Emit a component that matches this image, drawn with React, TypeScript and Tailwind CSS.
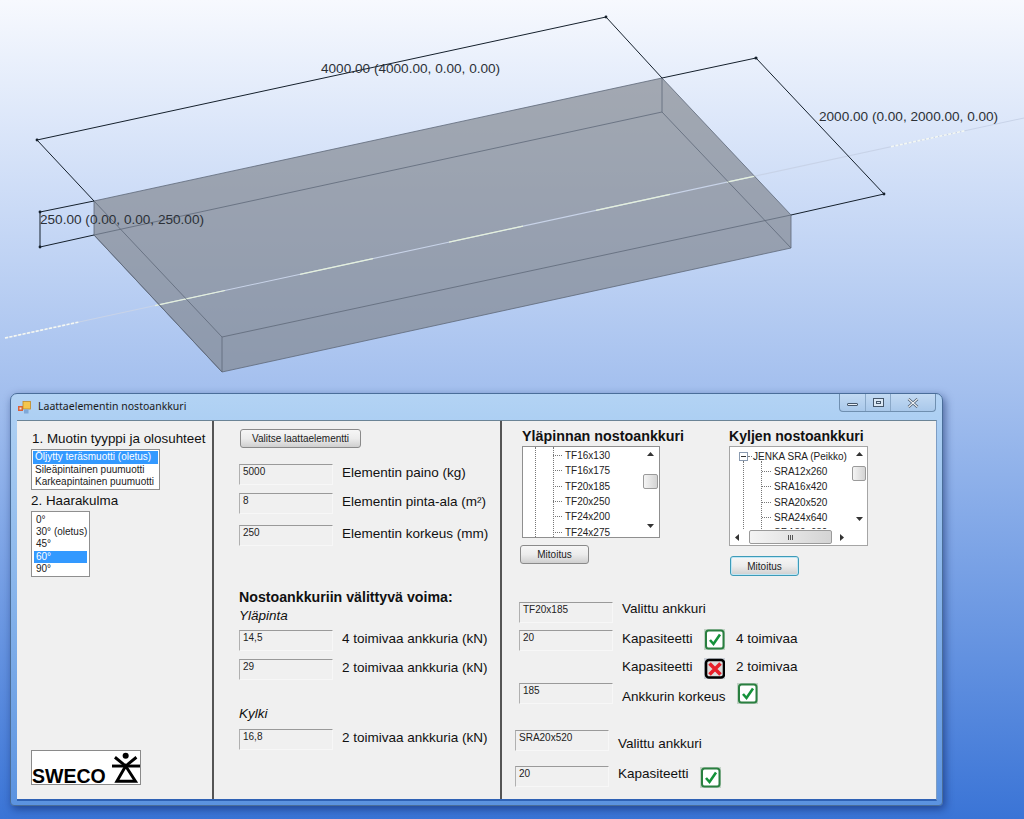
const sans = { fontFamily: '"Liberation Sans", Arial, sans-serif' };

const lineY = (x: number) => 338 - 0.2159 * (x - 5);

const brightDashes = [
  [155, 225],
  [300, 373],
  [449, 523],
  [596, 670],
  [727, 755],
];
const dottedDashes = [
  [5, 79],
  [891, 965],
];

function SlabView() {
  return (
    <svg className="block" width="1024" height="393" viewBox="0 0 1024 393">
      <polygon points="94,201 662,78 791,215 791,248 222,372 94,235" fill="#7f848c" fillOpacity="0.66" />
      <line x1="5" y1={lineY(5)} x2="1024" y2={lineY(1024)} stroke="#c8d3e8" strokeWidth="1.1" />
      {brightDashes.map(([a, b]) => (
        <line key={a} x1={a} y1={lineY(a)} x2={b} y2={lineY(b)} stroke="#e4f0dc" strokeWidth="1.2" />
      ))}
      {dottedDashes.map(([a, b]) => (
        <line key={a} x1={a} y1={lineY(a)} x2={b} y2={lineY(b)} stroke="#f4f8f4" strokeWidth="1.6" strokeDasharray="3 1.5" />
      ))}
      <g stroke="#5e6878" strokeWidth="0.8" fill="none">
        <polyline points="94,201 662,78 791,215 791,248 222,372 94,235 94,201" />
        <line x1="94" y1="235" x2="662" y2="112" />
        <line x1="662" y1="78" x2="662" y2="112" />
        <line x1="662" y1="112" x2="791" y2="248" />
        <line x1="94" y1="201" x2="222" y2="337" />
        <line x1="222" y1="337" x2="791" y2="215" />
        <line x1="222" y1="337" x2="222" y2="372" />
        <line x1="94" y1="235" x2="222" y2="372" />
      </g>
      <g stroke="#15202c" strokeWidth="1" fill="none">
        <polyline points="94,201 37,140 606,17 662,78 756,58 884,194 791,215" />
        <polyline points="94,201 40,212 40,247 94,235" />
      </g>
      <g fill="#15202c">
        <circle cx="37" cy="140" r="1.4" />
        <circle cx="606" cy="17" r="1.4" />
        <circle cx="756" cy="58" r="1.6" />
        <circle cx="884" cy="194" r="1.4" />
        <circle cx="40" cy="212" r="1.4" />
        <circle cx="40" cy="247" r="1.4" />
      </g>
      <g fill="#2c3138" fontSize="13.6" style={sans}>
        <text x="321" y="73">4000.00 (4000.00, 0.00, 0.00)</text>
        <text x="819" y="121">2000.00 (0.00, 2000.00, 0.00)</text>
        <text x="40" y="224">250.00 (0.00, 0.00, 250.00)</text>
      </g>
    </svg>
  );
}

function AppIcon() {
  return (
    <svg width="13" height="13" viewBox="0 0 13 13">
      <rect x="0" y="5" width="5" height="5" fill="#d9603a" />
      <rect x="1.5" y="6.5" width="2" height="2" fill="#fbe6c8" />
      <rect x="5" y="0.5" width="7.5" height="7.5" fill="#f4c64e" stroke="#c08a26" strokeWidth="0.8" />
      <rect x="6" y="8.5" width="4.5" height="4" fill="#7fa8d8" />
    </svg>
  );
}

function Field({ value }: { value: string }) {
  return (
    <div className="h-[21px] w-[94px] shrink-0 border border-t-[#9a9a9a] border-l-[#b0b0b0] border-r-[#f7f7f7] border-b-[#f7f7f7] bg-[#f0f0f0] pl-[3px] text-[10px] leading-[14px] text-[#222]">
      {value}
    </div>
  );
}

function Label({ children, className = '' }: { children: React.ReactNode; className?: string }) {
  return <div className={`text-[13.5px] leading-4 whitespace-nowrap text-[#111] ${className}`}>{children}</div>;
}

function Button({ children, focused, className }: { children: React.ReactNode; focused?: boolean; className: string }) {
  return (
    <div
      className={`flex items-center justify-center rounded-[3px] border bg-gradient-to-b from-[#f6f6f6] via-[#ececec] to-[#cfcfcf] text-[10px] text-[#222] ${
        focused ? 'border-[#3d9bb8] shadow-[inset_0_0_0_1px_#bfe6f5]' : 'border-[#8a8a8a]'
      } ${className}`}
    >
      {children}
    </div>
  );
}

function Check({ className = '' }: { className?: string }) {
  return (
    <svg className={`shrink-0 ${className}`} width="21" height="21" viewBox="0 0 21 21">
      <rect x="0" y="0" width="21" height="21" fill="#c3d2c6" />
      <rect x="2" y="1.5" width="17.5" height="18" rx="2.5" fill="#fff" stroke="#2a7f40" strokeWidth="2" />
      <path d="M6 11 L9.5 15 L16 5.5" fill="none" stroke="#14923a" strokeWidth="2.6" />
    </svg>
  );
}

function Cross() {
  return (
    <svg className="shrink-0" width="21" height="21" viewBox="0 0 21 21">
      <rect x="0" y="0" width="21" height="21" fill="#c9ced6" />
      <rect x="2" y="2" width="18" height="17.5" rx="3" fill="#ddd" stroke="#000" strokeWidth="2.6" />
      <path d="M5.5 5.5 L16.5 16.5 M16.5 5.5 L5.5 16.5" fill="none" stroke="#e8202a" strokeWidth="3.6" />
    </svg>
  );
}

function Arrow({ dir, className = '' }: { dir: 'up' | 'down' | 'left' | 'right'; className?: string }) {
  const pts = { up: '0,4 3.5,0 7,4', down: '0,0 3.5,4 7,0', left: '4,0 0,3.5 4,7', right: '0,0 4,3.5 0,7' }[dir];
  return (
    <svg className={`block shrink-0 ${className}`} width="7" height="7" viewBox="0 0 7 7">
      <polygon points={pts} fill="#333" />
    </svg>
  );
}

function Thumb({ className, children }: { className: string; children?: React.ReactNode }) {
  return (
    <div className={`shrink-0 rounded-[2px] border border-[#9a9a9a] bg-gradient-to-r from-[#f4f4f4] to-[#d4d4d4] ${className}`}>
      {children}
    </div>
  );
}

function TreeRow({ text, guides }: { text: string; guides: string }) {
  return (
    <div className={`flex h-[15.3px] items-center ${guides}`}>
      <span className="h-0 w-[9px] border-t border-dotted border-[#777]" />
      <span className="ml-[3px] text-[10px] text-[#222]">{text}</span>
    </div>
  );
}

function Guide({ className }: { className: string }) {
  return <div className={`absolute bottom-0 border-l border-dotted border-[#777] ${className}`} />;
}

const topAnchors = ['TF16x130', 'TF16x175', 'TF20x185', 'TF20x250', 'TF24x200', 'TF24x275'];
const sideAnchors = ['SRA12x260', 'SRA16x420', 'SRA20x520', 'SRA24x640', 'SRA30x680'];

function TopTree() {
  return (
    <div className="flex h-[92px] w-[138px] border border-[#8f8f8f] bg-white">
      <div className="relative flex-1 overflow-hidden pt-[1px]">
        <Guide className="top-0 left-[12px]" />
        <Guide className="top-0 left-[30px]" />
        {topAnchors.map((a) => (
          <TreeRow key={a} text={a} guides="pl-[30px]" />
        ))}
      </div>
      <div className="flex w-[17px] flex-col items-center pt-[5px]">
        <Arrow dir="up" />
        <Thumb className="mt-[15px] h-[15px] w-[15px]" />
        <Arrow dir="down" className="mt-[35px]" />
      </div>
    </div>
  );
}

function SideTree() {
  return (
    <div className="flex h-[100px] w-[139px] flex-col border border-[#a5a5a5] bg-white">
      <div className="flex min-h-0 flex-1">
        <div className="relative flex-1 overflow-hidden pt-[1px]">
          <Guide className="top-[14px] left-[13px]" />
          <Guide className="top-[14px] left-[31px]" />
          <div className="flex h-[16px] items-center pl-[9px]">
            <span className="flex h-[9px] w-[9px] items-center justify-center border border-[#8a9ab0] bg-white">
              <span className="h-0 w-[5px] border-t border-[#333]" />
            </span>
            <span className="h-0 w-[4px] border-t border-dotted border-[#777]" />
            <span className="ml-[1px] whitespace-nowrap text-[10px] text-[#222]">JENKA SRA (Peikko)</span>
          </div>
          {sideAnchors.map((a) => (
            <TreeRow key={a} text={a} guides="pl-[32px]" />
          ))}
        </div>
        <div className="flex w-[16px] flex-col items-center pt-[5px]">
          <Arrow dir="up" />
          <Thumb className="mt-[7px] h-[15px] w-[14px]" />
          <Arrow dir="down" className="mt-[36px]" />
        </div>
      </div>
      <div className="flex h-[16px] items-center pl-[5px]">
        <Arrow dir="left" />
        <Thumb className="mr-[8px] ml-[7px] flex h-[14px] w-[83px] items-center justify-center gap-[1px]">
          <span className="h-[5px] w-px bg-[#555]" />
          <span className="h-[5px] w-px bg-[#555]" />
          <span className="h-[5px] w-px bg-[#555]" />
        </Thumb>
        <Arrow dir="right" />
      </div>
    </div>
  );
}

function SwecoLogo() {
  return (
    <div className="mt-auto mb-[14px] ml-[14px] flex h-[35px] w-[110px] items-end border border-[#8a8a8a] bg-white">
      <span className="text-[19.5px] leading-[16px] font-bold text-black">SWECO</span>
      <svg className="ml-[6px]" width="29" height="33" viewBox="0 0 29 33">
        <circle cx="14" cy="4.5" r="3.1" fill="#000" />
        <path d="M3 6 L14 15 L25 6" fill="none" stroke="#000" strokeWidth="3" />
        <line x1="0" y1="15" x2="29" y2="15" stroke="#000" strokeWidth="3" />
        <path d="M14 15 L5 30.5 H24 Z" fill="none" stroke="#000" strokeWidth="3" />
      </svg>
    </div>
  );
}

function LeftColumn() {
  return (
    <div className="flex w-[197px] shrink-0 flex-col border-r-2 border-[#555]">
      <div className="mt-[10px] ml-[15px] text-[13.4px] leading-4 whitespace-nowrap text-[#111]">1. Muotin tyyppi ja olosuhteet</div>
      <div className="mt-[2px] ml-[14px] h-[41px] w-[129px] border border-[#8f8f8f] bg-white p-[1px] text-[10px] leading-[12.5px] text-[#222]">
        <div className="bg-[#3399ff] pl-[2px] text-white">Öljytty teräsmuotti (oletus)</div>
        <div className="pl-[2px]">Sileäpintainen puumuotti</div>
        <div className="pl-[2px]">Karkeapintainen puumuotti</div>
      </div>
      <div className="mt-[3px] ml-[14px] text-[13.4px] leading-4 text-[#111]">2. Haarakulma</div>
      <div className="mt-[2px] ml-[14px] h-[66px] w-[59px] border border-[#8f8f8f] bg-white p-[2px] text-[10px] leading-[12.2px] text-[#222]">
        <div className="pl-[2px]">0°</div>
        <div className="pl-[2px] whitespace-nowrap">30° (oletus)</div>
        <div className="pl-[2px]">45°</div>
        <div className="bg-[#3399ff] pl-[2px] text-white">60°</div>
        <div className="pl-[2px]">90°</div>
      </div>
      <SwecoLogo />
    </div>
  );
}

function MiddleColumn() {
  return (
    <div className="flex w-[288px] shrink-0 flex-col border-r-2 border-[#555] pl-[25px]">
      <Button className="mt-[8px] ml-[1px] h-[19px] w-[121px]">Valitse laattaelementti</Button>
      <div className="mt-[16px] flex items-center gap-[9px]">
        <Field value="5000" />
        <Label className="mb-[3px]">Elementin paino (kg)</Label>
      </div>
      <div className="mt-[8px] flex items-center gap-[9px]">
        <Field value="8" />
        <Label className="mb-[3px]">Elementin pinta-ala (m²)</Label>
      </div>
      <div className="mt-[11px] flex items-center gap-[9px]">
        <Field value="250" />
        <Label className="mb-[3px]">Elementin korkeus (mm)</Label>
      </div>
      <div className="mt-[43px] text-[14.2px] leading-4 font-bold whitespace-nowrap text-[#111]">Nostoankkuriin välittyvä voima:</div>
      <div className="mt-[3px] text-[13.5px] leading-4 text-[#111] italic">Yläpinta</div>
      <div className="mt-[6px] flex items-center gap-[9px]">
        <Field value="14,5" />
        <Label className="mb-[3px]">4 toimivaa ankkuria (kN)</Label>
      </div>
      <div className="mt-[8px] flex items-center gap-[9px]">
        <Field value="29" />
        <Label className="mb-[3px]">2 toimivaa ankkuria (kN)</Label>
      </div>
      <div className="mt-[26px] text-[13.5px] leading-4 text-[#111] italic">Kylki</div>
      <div className="mt-[7px] flex items-center gap-[9px]">
        <Field value="16,8" />
        <Label className="mb-[3px]">2 toimivaa ankkuria (kN)</Label>
      </div>
    </div>
  );
}

function RightColumn() {
  return (
    <div className="flex flex-1 flex-col">
      <div className="flex h-[155px] pt-[7px]">
        <div className="ml-[20px] flex w-[207px] flex-col">
          <div className="h-[18px] text-[14.3px] leading-4 font-bold whitespace-nowrap text-[#111]">Yläpinnan nostoankkuri</div>
          <TopTree />
          <Button className="mt-[7px] -ml-[2px] h-[19px] w-[69px]">Mitoitus</Button>
        </div>
        <div className="flex flex-col">
          <div className="h-[18px] text-[14.1px] leading-4 font-bold whitespace-nowrap text-[#111]">Kyljen nostoankkuri</div>
          <SideTree />
          <Button focused className="mt-[10px] ml-[1px] h-[20px] w-[69px]">
            Mitoitus
          </Button>
        </div>
      </div>
      <div className="mt-[26px] ml-[17px] flex h-[21px] items-center">
        <Field value="TF20x185" />
        <Label className="mb-[7px] ml-[9px]">Valittu ankkuri</Label>
      </div>
      <div className="mt-[7px] ml-[17px] flex h-[21px] items-center">
        <Field value="20" />
        <Label className="mb-[3px] ml-[9px] w-[82px]">Kapasiteetti</Label>
        <Check className="mb-[2px]" />
        <Label className="mb-[3px] ml-[11px]">4 toimivaa</Label>
      </div>
      <div className="mt-[7px] ml-[120px] flex h-[21px] items-center">
        <Label className="mb-[3px] w-[82px]">Kapasiteetti</Label>
        <Cross />
        <Label className="mb-[3px] ml-[11px]">2 toimivaa</Label>
      </div>
      <div className="mt-[4px] ml-[17px] flex h-[21px] items-center">
        <Field value="185" />
        <Label className="mt-[7px] ml-[9px] w-[115px]">Ankkurin korkeus</Label>
        <Check />
      </div>
      <div className="mt-[26px] ml-[13px] flex h-[21px] items-center">
        <Field value="SRA20x520" />
        <Label className="mt-[7px] ml-[9px]">Valittu ankkuri</Label>
      </div>
      <div className="mt-[15px] ml-[13px] flex h-[21px] items-center">
        <Field value="20" />
        <Label className="mb-[5px] ml-[9px] w-[82px]">Kapasiteetti</Label>
        <Check className="mt-[2px]" />
      </div>
    </div>
  );
}

function TitleBar() {
  return (
    <div className="flex h-[26px] items-center pl-[7px]">
      <AppIcon />
      <span className="ml-[7px] text-[10.5px] text-[#1a1a1a]" style={{ fontFamily: '"Noto Sans", sans-serif' }}>
        Laattaelementin nostoankkuri
      </span>
      <div className="mr-[6px] mb-[8px] ml-auto flex h-[18px] w-[97px] rounded-b-[4px] border border-t-0 border-[#6f8fb0] bg-gradient-to-b from-[#c3daf3] to-[#a9c8ea]">
        <div className="flex w-[26px] items-center justify-center border-r border-[#8aa8c8]">
          <span className="mt-[3px] h-[3px] w-[11px] rounded-[1px] border border-[#45566a] bg-[#e8eef5]" />
        </div>
        <div className="flex w-[25px] items-center justify-center border-r border-[#8aa8c8]">
          <span className="flex h-[9px] w-[11px] items-center justify-center border border-[#45566a] bg-[#dbe8f5]">
            <span className="h-[3px] w-[5px] border border-[#45566a]" />
          </span>
        </div>
        <div className="flex flex-1 items-center justify-center">
          <svg width="12" height="10" viewBox="0 0 12 10">
            <path d="M1.5 1 L10.5 9 M10.5 1 L1.5 9" stroke="#45566a" strokeWidth="2.6" />
            <path d="M1.5 1 L10.5 9 M10.5 1 L1.5 9" stroke="#f2f5f8" strokeWidth="1.1" />
          </svg>
        </div>
      </div>
    </div>
  );
}

export default function App() {
  return (
    <div
      className="h-[819px] w-[1024px] overflow-hidden bg-gradient-to-b from-[#f7f9fe] via-[#a3bfee] via-48% to-[#3a74d6]"
      style={sans}
    >
      <SlabView />
      <div className="ml-[10px] h-[413px] w-[933px] rounded-t-[7px] rounded-b-[4px] border border-[#4a6d99] bg-gradient-to-b from-[#b3d3f4] via-[#a9cdf2] via-10% to-[#5b93e0] shadow-[2px_3px_9px_rgba(10,30,90,0.55)]">
        <TitleBar />
        <div className="ml-[6px] flex h-[381px] w-[920px] border-t border-r border-b-2 border-t-[#6b8496] border-r-[#7d9dc4] border-b-[#2f62b5] bg-[#f0f0f0]">
          <LeftColumn />
          <MiddleColumn />
          <RightColumn />
        </div>
      </div>
    </div>
  );
}
